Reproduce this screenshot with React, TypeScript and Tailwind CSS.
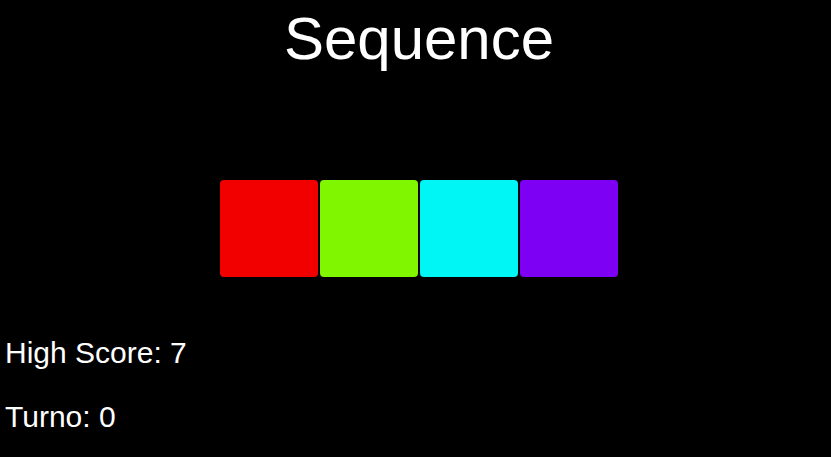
const colors = ["bg-[#f20000]", "bg-[#80f700]", "bg-[#00f5f5]", "bg-[#7d00f5]"];

export default function App() {
  return (
    <div className="min-h-[457px] bg-black text-white font-['Liberation_Sans',Arial,sans-serif]">
      <div className="pl-[7px] flex flex-col items-center">
        <h1 className="text-[60px] leading-none pt-[9px]">Sequence</h1>
        <div className="flex gap-[2px] mt-[111px]">
          {colors.map((c, i) => (
            <div key={i} className={`w-[98px] h-[97px] rounded-[4px] ${c}`} />
          ))}
        </div>
      </div>
      <div className="pl-[5px] mt-[61px] text-[30px] leading-none">
        <p>High Score: 7</p>
        <p className="mt-[34px]">Turno: 0</p>
      </div>
    </div>
  );
}
